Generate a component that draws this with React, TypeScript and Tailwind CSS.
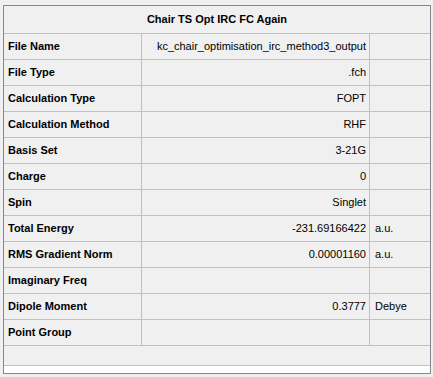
import React from 'react';

// Summary properties shown in the results grid
const rows: { label: string; value: string; unit?: string }[] = [
  { label: 'File Name', value: 'kc_chair_optimisation_irc_method3_output' },
  { label: 'File Type', value: '.fch' },
  { label: 'Calculation Type', value: 'FOPT' },
  { label: 'Calculation Method', value: 'RHF' },
  { label: 'Basis Set', value: '3-21G' },
  { label: 'Charge', value: '0' },
  { label: 'Spin', value: 'Singlet' },
  { label: 'Total Energy', value: '-231.69166422', unit: 'a.u.' },
  { label: 'RMS Gradient Norm', value: '0.00001160', unit: 'a.u.' },
  { label: 'Imaginary Freq', value: '' },
  { label: 'Dipole Moment', value: '0.3777', unit: 'Debye' },
  { label: 'Point Group', value: '' },
];

export default function App() {
  return (
    <div
      className="w-[433px] h-[377px] bg-[#f0f0f0] pl-[3px] pt-[5px] text-[11px] text-black"
      style={{ fontFamily: '"Liberation Sans", Arial, sans-serif' }}
    >
      <div className="w-[428px] h-[369px] border border-[#828790] flex flex-col">
        {/* Title */}
        <div className="h-[28px] shrink-0 border-b border-[#c0c0c0] flex items-center justify-center font-bold">
          Chair TS Opt IRC FC Again
        </div>

        {rows.map((r) => (
          <div key={r.label} className="h-[26px] shrink-0 flex border-b border-[#c0c0c0]">
            <div className="w-[138px] border-r border-[#c0c0c0] flex items-center pl-[4px] font-bold">
              {r.label}
            </div>
            <div className="w-[228px] border-r border-[#c0c0c0] flex items-center justify-end pr-[3px]">
              {r.value}
            </div>
            <div className="w-[60px] flex items-center pl-[5px]">{r.unit}</div>
          </div>
        ))}

        {/* Blank footer row */}
        <div className="h-[20px] shrink-0 border-b border-[#c0c0c0]" />
        <div className="flex-1 bg-white" />
      </div>
    </div>
  );
}
